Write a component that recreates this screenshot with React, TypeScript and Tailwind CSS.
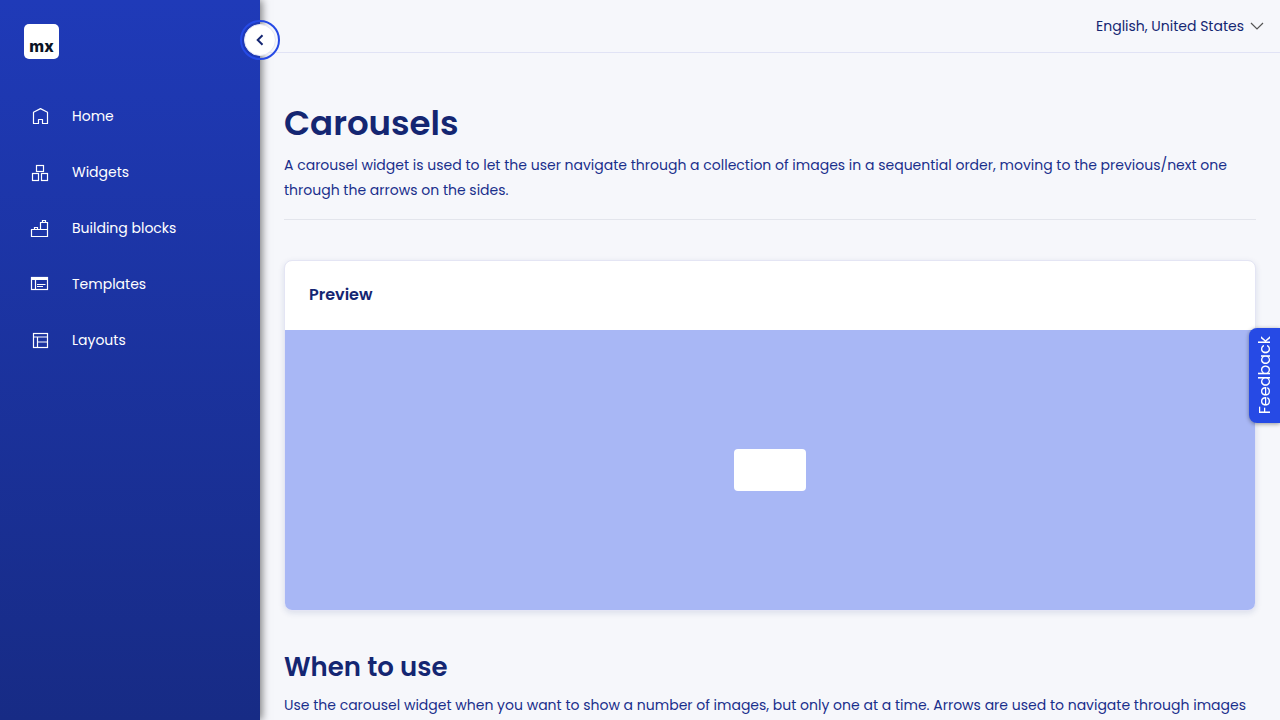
import type { ReactNode } from "react";

function NavIcon({ children }: { children: ReactNode }) {
  return (
    <svg
      width="20"
      height="20"
      viewBox="0 0 20 20"
      fill="none"
      stroke="currentColor"
      strokeWidth="1.2"
      aria-hidden="true"
    >
      {children}
    </svg>
  );
}

const navItems: { label: string; icon: ReactNode }[] = [
  {
    label: "Home",
    icon: (
      <path
        d="M3.5 17.5V6.2L10.5 2.6L17.5 6.2V17.5H12.5V13.5H8.5V17.5Z"
        strokeLinejoin="round"
      />
    ),
  },
  {
    label: "Widgets",
    icon: (
      <>
        <rect x="6.5" y="3.5" width="7" height="6" />
        <rect x="2.5" y="11.5" width="6" height="7" />
        <rect x="11.5" y="11.5" width="6" height="7" />
      </>
    ),
  },
  {
    label: "Building blocks",
    icon: (
      <>
        <path d="M1.5 18.5V11.5H10.5V4.5H17.5V18.5Z" />
        <path d="M10.5 11.5H17.5M4.5 11.5V9.5H7.5V11.5M12.5 4.5V2.5H15.5V4.5" />
      </>
    ),
  },
  {
    label: "Templates",
    icon: (
      <>
        <rect x="1.5" y="3.5" width="16" height="12" />
        <path d="M1 4.5H18" strokeWidth="3" />
        <path d="M5.5 6V15.5M7 10.5H15.5M7 12.5H13" />
      </>
    ),
  },
  {
    label: "Layouts",
    icon: (
      <>
        <rect x="3.5" y="3.5" width="14" height="14" />
        <path d="M3.5 7H17.5M7.5 7V17.5M7.5 12H17.5" />
      </>
    ),
  },
];

function Sidebar() {
  return (
    <aside className="relative z-10 w-[260px] shrink-0 bg-linear-to-b from-[#1f3ab8] to-[#172b85] shadow-[2px_0_8px_rgba(0,0,0,0.5)]">
      <a
        href="#home"
        aria-label="mx home"
        className="mt-6 ml-6 flex h-[35px] w-[35px] items-end justify-center rounded-[5px] bg-white pb-1 font-['Inter',sans-serif] text-base leading-[18px] font-extrabold text-[#0a1325]"
      >
        mx
      </a>
      <nav className="mt-[29px]">
        <ul>
          {navItems.map((item) => (
            <li key={item.label}>
              <a
                href={"#" + item.label.toLowerCase().replace(" ", "-")}
                className="flex h-14 items-center gap-[22px] pl-[30px] text-sm text-white"
              >
                <NavIcon>{item.icon}</NavIcon>
                {item.label}
              </a>
            </li>
          ))}
        </ul>
      </nav>
      <button
        type="button"
        aria-label="Collapse menu"
        className="absolute top-5 -right-5 flex h-10 w-10 items-center justify-center rounded-full border-2 border-[#264ae5]"
      >
        <span className="flex h-8 w-8 items-center justify-center rounded-full border border-[#e4e6f5] bg-white text-[#142672]">
          <svg width="12" height="12" viewBox="0 0 12 12" fill="none" stroke="currentColor" strokeWidth="2" aria-hidden="true">
            <path d="M8.5 1.2L3.7 6L8.5 10.8" />
          </svg>
        </span>
      </button>
    </aside>
  );
}

export default function App() {
  return (
    <div className="flex min-h-screen bg-[#f6f7fb] font-['Poppins','Inter',sans-serif] text-[#1a2f8c]">
      <Sidebar />
      <div className="min-w-0 flex-1">
        <header className="flex h-[53px] items-center justify-end border-b border-[#e1e3f5] px-4">
          <button type="button" className="flex items-center gap-[6px] text-sm text-[#142672]">
            English, United States
            <svg width="14" height="14" viewBox="0 0 14 14" fill="none" stroke="#555" strokeWidth="1.2" aria-hidden="true">
              <path d="M1 4L7 10L13 4" />
            </svg>
          </button>
        </header>
        <main className="px-6 pt-11">
          <h1 className="text-[34px] leading-[52px] font-semibold text-[#142672]">Carousels</h1>
          <p className="mt-1 border-b border-[#e3e5ec] pb-4 text-sm leading-[25px]">
            A carousel widget is used to let the user navigate through a collection of images in a
            sequential order, moving to the previous/next one through the arrows on the sides.
          </p>
          <section className="mt-10 overflow-hidden rounded-lg border border-[#e4e5f4] bg-white shadow-[0_2px_6px_rgba(20,38,114,0.12)]">
            <h2 className="px-6 pt-[21px] pb-[23px] text-base leading-[25px] font-semibold text-[#142672]">
              Preview
            </h2>
            <div className="flex h-[280px] items-center justify-center bg-[#a8b7f5]">
              <div className="h-[42px] w-[72px] rounded bg-white" />
            </div>
          </section>
          <h2 className="mt-9 text-[26px] leading-10 font-semibold text-[#142672]">When to use</h2>
          <p className="mt-[6px] text-sm leading-[25px]">
            Use the carousel widget when you want to show a number of images, but only one at a
            time. Arrows are used to navigate through images
          </p>
        </main>
      </div>
      <button
        type="button"
        className="fixed top-[328px] right-0 z-20 flex h-[95px] w-[31px] items-center justify-center rounded-l-lg bg-[#264ae5] text-base text-white shadow-[0_1px_4px_rgba(0,0,0,0.4)]"
      >
        <span className="rotate-180 [writing-mode:vertical-rl]">Feedback</span>
      </button>
    </div>
  );
}
